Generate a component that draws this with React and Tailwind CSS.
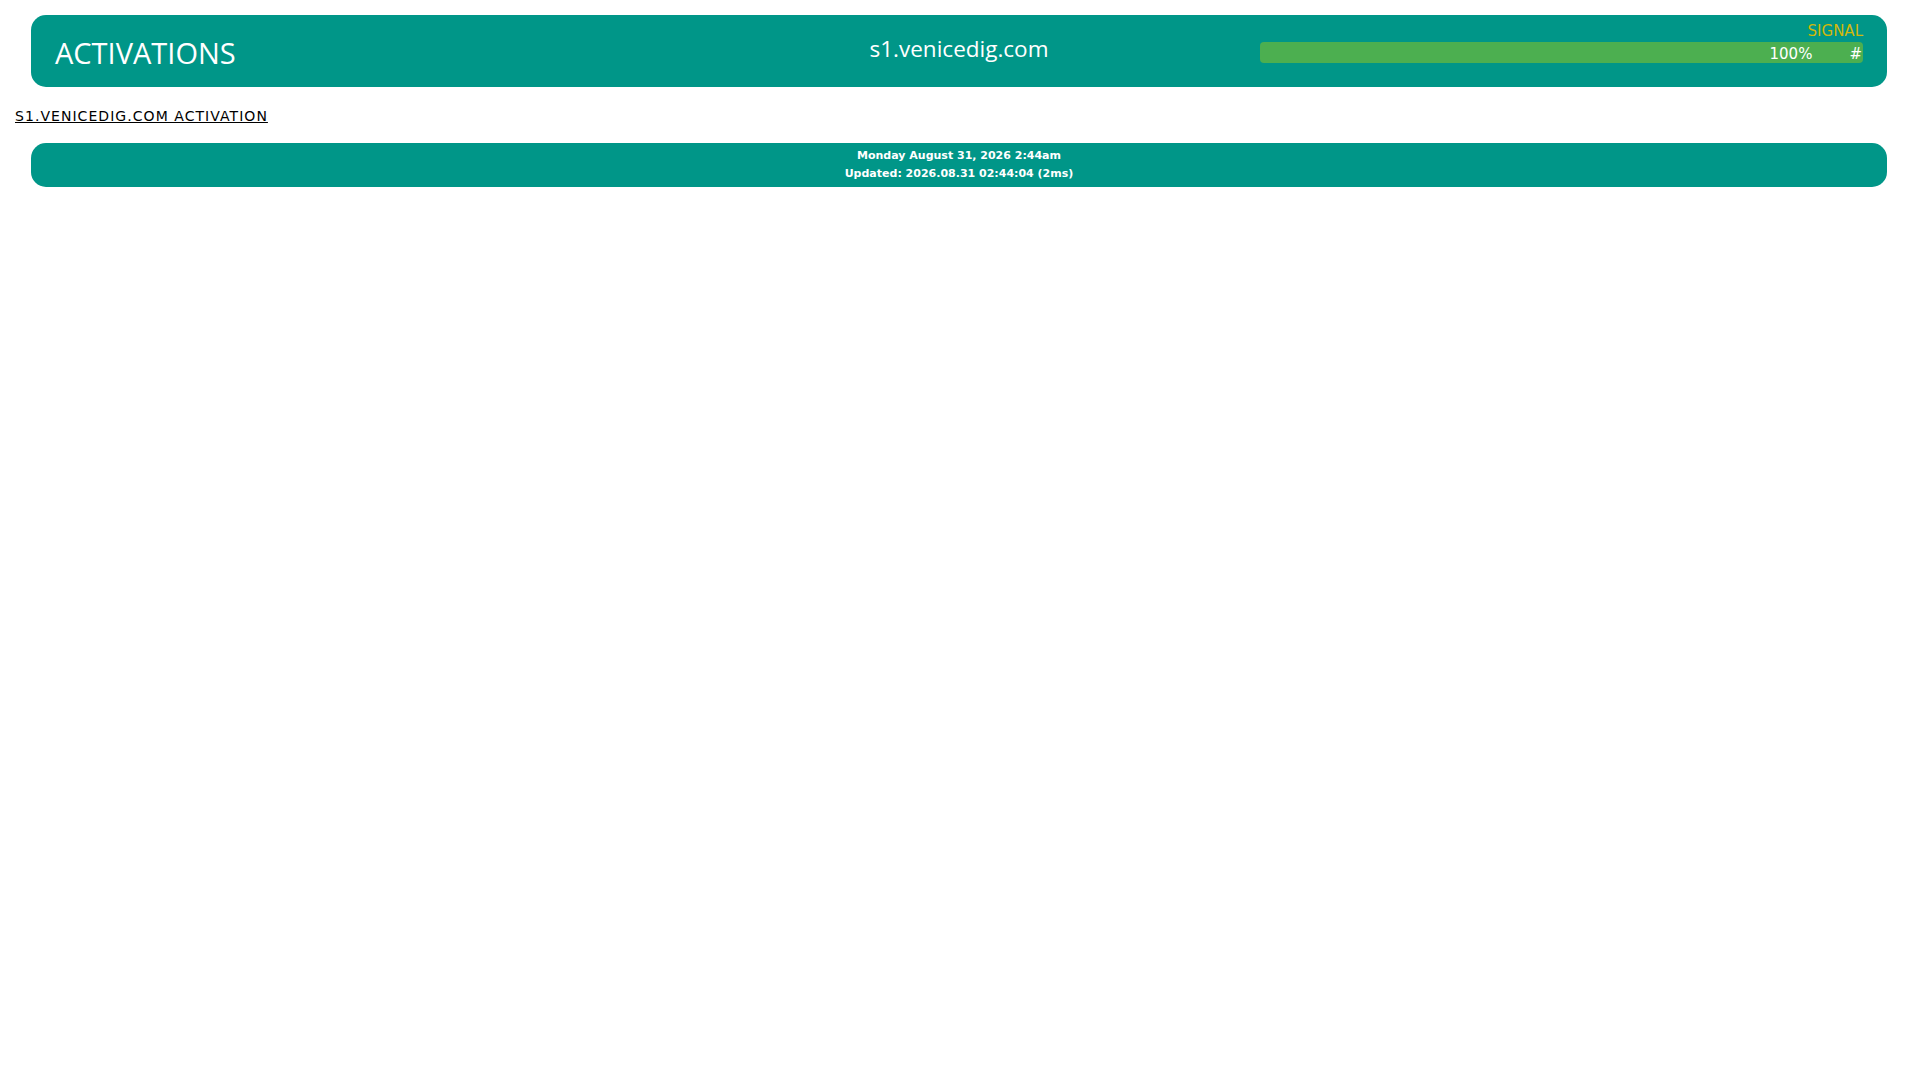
export default function App() {
  return (
    <div className="min-h-screen bg-white" style={{ fontFamily: '"DejaVu Sans", Verdana, sans-serif' }}>
      {/* Top banner: title, host, signal meter */}
      <header className="mx-[31px] mt-[15px] h-[72px] rounded-[15px] bg-[#009688] px-[24px] grid grid-cols-3 items-start">
        <div
          className="pt-[23px] text-[29px] leading-none text-white"
          style={{ fontFamily: '"Open Sans", sans-serif' }}
        >
          ACTIVATIONS
        </div>
        <div
          className="pt-[23px] text-center text-[22.5px] leading-none text-white"
          style={{ fontFamily: '"Open Sans", sans-serif' }}
        >
          s1.venicedig.com
        </div>
        <div className="pt-[9px] flex flex-col items-end">
          <div className="text-[15px] leading-none text-[#d2b80a]">SIGNAL</div>
          <div className="mt-[3px] h-[21px] w-full rounded-[4px] bg-[#4caf50] flex justify-end text-[15px] leading-[25px] text-white pr-[1px]">
            <span>100%</span>
            <span className="ml-[37px]">#</span>
          </div>
        </div>
      </header>

      <div className="pl-[15px] mt-[22px] text-[14px] leading-none tracking-[1.05px]">
        <a href="#" className="text-black underline">
          S1.VENICEDIG.COM ACTIVATION
        </a>
      </div>

      {/* Status strip */}
      <div className="mx-[31px] mt-[20px] h-[44px] rounded-[15px] bg-[#009688] pt-[4px] text-center text-[11px] font-bold leading-[18px] text-white">
        <div>Monday August 31, 2026 2:44am</div>
        <div>Updated: 2026.08.31 02:44:04 (2ms)</div>
      </div>
    </div>
  );
}
